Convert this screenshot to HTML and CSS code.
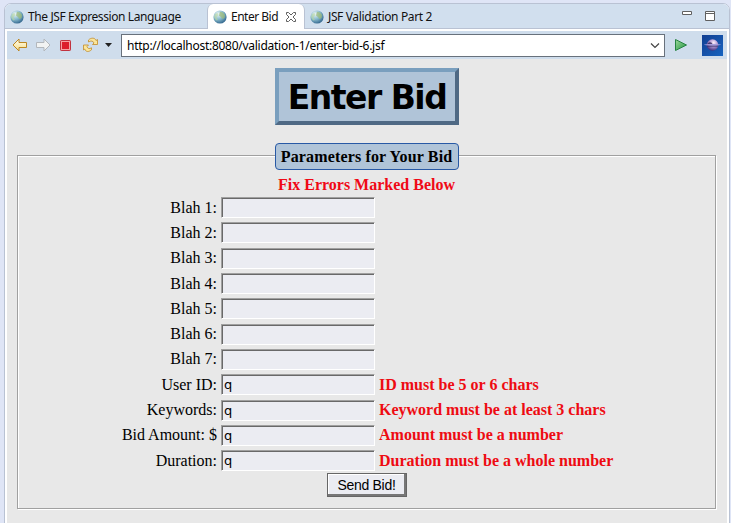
FILE: index.html
```
<!DOCTYPE html>
<html lang="en">
<head>
<meta charset="utf-8">
<title>Enter Bid</title>
<link rel="stylesheet" href="styles.css">
</head>
<body>
<svg width="0" height="0" class="defs" aria-hidden="true">
  <defs>
    <radialGradient id="sea" cx="35%" cy="28%" r="75%"><stop offset="0" stop-color="#eff8f8"/><stop offset=".55" stop-color="#84b7cb"/><stop offset="1" stop-color="#34688f"/></radialGradient>
    <linearGradient id="gold" x2="0" y2="1"><stop offset="0" stop-color="#fffef0"/><stop offset="1" stop-color="#f6dc86"/></linearGradient>
    <linearGradient id="go" x2="1" y2="1"><stop offset="0" stop-color="#9bd79c"/><stop offset="1" stop-color="#22963f"/></linearGradient>
    <linearGradient id="space" x2="1" y2="1"><stop offset="0" stop-color="#123e91"/><stop offset="1" stop-color="#1764c0"/></linearGradient>
    <radialGradient id="moon" cx="60%" cy="30%" r="70%"><stop offset="0" stop-color="#fff0fa"/><stop offset=".45" stop-color="#b49bd4"/><stop offset="1" stop-color="#45327f"/></radialGradient>
    <symbol id="globe" viewBox="0 0 14 14"><circle cx="7" cy="7" r="6.6" fill="url(#sea)"/><path d="M7 1.800 10 2.500 12 5 11.500 8 9.500 9 8 7 6 5.500Z" fill="#9cbb74" opacity=".7"/><path d="M2 4 4.500 3 5.500 5 3.500 7.500 5 10 3 10.500 1 7Z" fill="#b9d8a2" opacity=".6"/></symbol>
  </defs>
</svg>
<div class="frame">
  <div class="tabs">
    <div class="tab first"><svg class="globe"><use href="#globe"/></svg><span class="t1">The JSF Expression Language</span></div>
    <div class="tab active"><svg class="globe"><use href="#globe"/></svg><span class="t2">Enter Bid</span>
      <svg class="close" viewBox="0 0 12 12"><path d="M1.500 1.500h2L6 4l2.500-2.500h2v2L8 6l2.500 2.500v2h-2L6 8l-2.500 2.500h-2v-2L4 6 1.500 3.500Z" fill="#fff" stroke="#606060"/></svg></div>
    <div class="tab"><svg class="globe"><use href="#globe"/></svg><span class="t3">JSF Validation Part 2</span></div>
    <svg class="window" width="36" height="12" viewBox="0 0 36 12"><path d="M1.500 1.500h9v3h-9zM24.500 1.500h9v9h-9zM24.500 3.500h9" fill="#fff" stroke="#606060"/></svg>
  </div>
  <div class="toolbar">
    <svg class="tools" width="108" height="28" viewBox="0 0 108 28">
      <path d="M6 14 12 8v3.500h7.500v5H12V20Z" fill="url(#gold)" stroke="#bd8722" stroke-linejoin="round"/>
      <path d="M43 14 37 8v3.500h-7.500v5H37V20Z" fill="#f1f3f3" stroke="#b2b7bc" stroke-linejoin="round"/>
      <rect x="53.500" y="9.500" width="10" height="10" rx=".7" fill="#f5a2a2" stroke="#c1323e"/><rect x="55" y="11" width="7" height="7" fill="#dc1e2b"/>
      <g fill="#fbe69b" stroke="#c28b28" stroke-width=".8" stroke-linejoin="round"><path d="M81.500 9C84 6.500 88 6.500 89 9.500l1.500-1v5h-5l1.500-1.500C86.200 9.800 84 9.500 81.500 11Z"/><path d="M76.500 14h5l-1.500 1.500c.5 2 2.200 2.800 4.500 1.300v2C81.500 21.500 78.500 20.800 77.800 18l-1.300 1Z"/></g>
      <path d="M98 12h7l-3.500 4Z" fill="#222"/>
    </svg>
    <div class="address"><span>http://localhost:8080/validation-1/enter-bid-6.jsf</span><svg width="10" height="7" viewBox="0 0 10 7"><path d="M1 1.500 5 5.500 9 1.500" fill="none" stroke="#444" stroke-width="1.200"/></svg></div>
    <svg class="run" width="14" height="14" viewBox="0 0 14 14"><path d="M1.500 1.500 12.500 7 1.500 12.500Z" fill="url(#go)" stroke="#268343" stroke-linejoin="round"/></svg>
    <svg class="eclipse" width="21" height="21" viewBox="0 0 21 21"><path d="M0 0h21v21H0z" fill="url(#space)"/><circle cx="10.500" cy="10" r="5.800" fill="url(#moon)"/><path d="M5.500 9C7 6.500 10 6.500 10.500 9.500Z" fill="#292052" opacity=".75"/><path d="M5 11h11" stroke="#2b2462" stroke-width="1"/><ellipse cx="10.500" cy="9.800" rx="8.500" ry=".7" fill="#a49bdb"/></svg>
  </div>
  <main class="page">
    <h1>Enter Bid</h1>
    <form onsubmit="return false">
      <fieldset>
        <legend>Parameters for Your Bid</legend>
        <div class="notice">Fix Errors Marked Below</div>
        <div class="fields">
          <label for="b1">Blah 1:</label><input id="b1"><b></b>
          <label for="b2">Blah 2:</label><input id="b2"><b></b>
          <label for="b3">Blah 3:</label><input id="b3"><b></b>
          <label for="b4">Blah 4:</label><input id="b4"><b></b>
          <label for="b5">Blah 5:</label><input id="b5"><b></b>
          <label for="b6">Blah 6:</label><input id="b6"><b></b>
          <label for="b7">Blah 7:</label><input id="b7"><b></b>
          <label for="user">User ID:</label><input id="user" value="q"><b>ID must be 5 or 6 chars</b>
          <label for="keys">Keywords:</label><input id="keys" value="q"><b>Keyword must be at least 3 chars</b>
          <label for="amount">Bid Amount: $</label><input id="amount" value="q"><b>Amount must be a number</b>
          <label for="days">Duration:</label><input id="days" value="q"><b>Duration must be a whole number</b>
        </div>
        <button>Send Bid!</button>
      </fieldset>
    </form>
  </main>
</div>
</body>
</html>
```
FILE: styles.css
```
* { box-sizing: border-box; }
body { margin: 0; height: 523px; overflow: hidden; background: #dfe5f6; padding: 3px 1px 0 4px; }
.defs { display: block; height: 0; width: 0; }
.frame { height: 530px; border: 1px solid #b9c2d3; border-radius: 7px 7px 0 0; background: #fff; overflow: hidden; }
.tabs { height: 25px; display: flex; background: #d1dfee; border-bottom: 1px solid #b9c2d3; font: 12px "Noto Sans", sans-serif; color: #111; }
.tab { display: flex; align-items: center; padding-left: 5px; height: 25px; white-space: nowrap; }
.tab span { line-height: 16px; margin-top: 1px; }
.first { width: 202px; }
.active { width: 98px; background: #fff; border: 1px solid #b9c2d3; border-width: 0 1px; border-radius: 6px 6px 0 0; }
.globe { width: 14px; height: 14px; margin-right: 4px; flex: none; margin-top: 1px; }
.t1 { letter-spacing: -0.4px; }
.t2 { letter-spacing: -0.5px; }
.t3 { letter-spacing: -0.37px; }
.close { width: 12px; height: 12px; margin: 1px 0 0 7px; flex: none; }
.window { margin: 6px 12px 0 auto; flex: none; }
.toolbar { height: 28px; margin: 2px 2px 0 2px; background: #cfddec; display: flex; align-items: center; }
.tools { margin-right: 6px; flex: none; }
.address { width: 544px; height: 23px; border: 1px solid #68717c; background: #fff; display: flex; align-items: center; justify-content: space-between; padding: 0 4px 0 5px; font: 12px "Noto Sans", sans-serif; letter-spacing: -.27px; white-space: nowrap; }
.run { margin-left: 9px; flex: none; }
.eclipse { margin-left: 14px; flex: none; }
.page { margin: 0 2px; height: 475px; background: #e8e8e8; padding: 9px 11px 0 10px; font: 16px "Liberation Serif", serif; color: #000; }
h1 { width: 184px; height: 57px; margin: 0 auto 17px; padding-left: 1px; border: 4px solid; border-color: #7a9fbe #4f6984 #4f6984 #7a9fbe; background: #b0c4d8; font: bold 33px/51px "DejaVu Sans", sans-serif; letter-spacing: -1.500px; text-align: center; white-space: nowrap; }
fieldset { height: 367px; margin: 0; padding: 0; border: 1px solid #a0a0a0; box-shadow: inset 1px 1px #fff, 1px 1px #fff; min-width: 0; }
legend { position: relative; top: 1px; width: 184px; height: 27px; margin: 0 auto; border: 1px solid #2859a5; border-radius: 4px; background: #b0c4d8; text-align: center; font-weight: bold; line-height: 26px; padding: 0; letter-spacing: .15px; }
.notice { height: 26px; color: #f00816; font-weight: bold; line-height: 32px; text-align: center; }
.fields { display: grid; grid-template-columns: 199px 154px auto; grid-auto-rows: 25.3px; column-gap: 4px; align-items: center; }
label { text-align: right; }
input { width: 154px; height: 21px; margin: 0; border: 1px solid; border-color: #a0a0a0 #fff #fff #a0a0a0; box-shadow: inset 1px 1px #696969; background: #ebecf2; padding: 0 2px; font: 13px "DejaVu Sans", sans-serif; }
.fields b { color: #ee0b12; white-space: nowrap; }
button { display: block; width: 80px; height: 24px; margin: 0 auto; padding: 0; border: 1px solid #666; box-shadow: inset -2px -2px #777, inset 1px 1px #fff; background: #ebecf2; color: #000; font: 14px/20px "Liberation Sans", sans-serif; letter-spacing: -.3px; }
```
